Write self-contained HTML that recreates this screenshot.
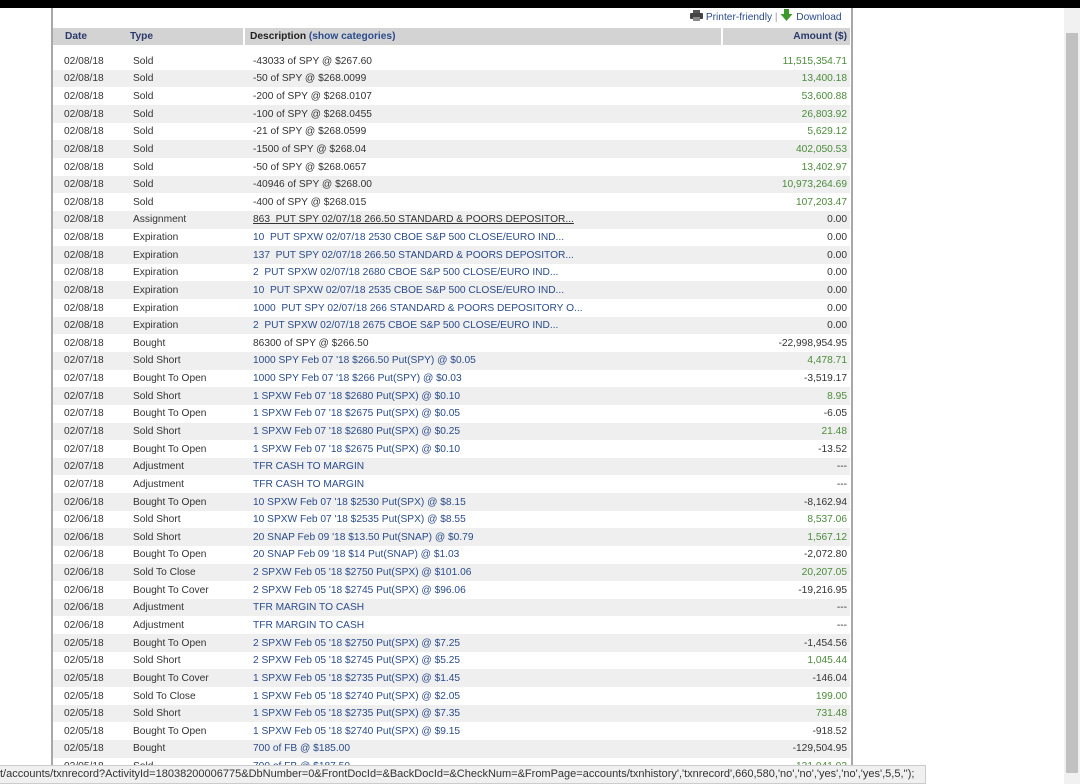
<!DOCTYPE html>
<html><head><meta charset="utf-8"><style>
*{margin:0;padding:0;box-sizing:border-box}
body{width:1080px;height:784px;overflow:hidden;background:#fff;font-family:"Liberation Sans",Arial,sans-serif;font-size:10.2px;color:#333;position:relative}
.top{position:absolute;left:0;top:0;width:1080px;height:8px;background:#000}
.lb{position:absolute;left:51px;top:8px;width:2px;height:760px;background:#a8a8a8}
.rb{position:absolute;left:851px;top:8px;width:2px;height:760px;background:#a8a8a8}
.sbt{position:absolute;left:1064px;top:8px;width:16px;height:776px;background:#f1f1f1}
.sbth{position:absolute;left:1066px;top:33px;width:12px;height:740px;background:#c1c1c1}
.links{position:absolute;top:9px;left:690px;font-size:10.2px;color:#2a4c8c;white-space:nowrap}
.hdr{position:absolute;left:53px;top:28px;width:797px;height:17px;background:#d3d3d3;font-weight:bold;color:#2a3a6a}
.hdr span{position:absolute;top:3px}
.sep{position:absolute;top:0;width:2px;height:17px;background:#fff}
.row{position:absolute;left:53px;width:797px;height:17.63px}
.row.g{background:#efefef}
.row span{position:absolute;top:3.5px;white-space:nowrap}
.d{left:11px}.t{left:80px}.s{left:200px}.a{right:3px}
.l{color:#2a4c8c}.u{text-decoration:underline;color:#333}
.p{color:#4b8c3a}
.status{position:absolute;left:0;top:765px;width:926px;height:19px;background:#f0f0f0;border:1px solid #ccc;border-left:none;font-size:11px;color:#333;padding:2px 0 0 0;white-space:nowrap;overflow:hidden}
</style></head><body>
<div class="top"></div>
<div class="lb"></div><div class="rb"></div>
<div class="sbt"></div><div class="sbth"></div>
<div class="links"><svg width="13" height="11" viewBox="0 0 13 11" style="vertical-align:-1px"><rect x="3" y="0" width="7" height="3" fill="#555"/><rect x="0" y="3" width="13" height="6" rx="1" fill="#444"/><rect x="3" y="7" width="7" height="4" fill="#888"/></svg> Printer-friendly <span style="color:#999">|</span> <svg width="13" height="12" viewBox="0 0 13 12" style="vertical-align:-1px"><path d="M4 0h5v5h3.5L6.5 12 0.5 5H4z" fill="#3c9a2a"/></svg> Download</div>
<div class="hdr"><span style="left:12px">Date</span><span style="left:77px">Type</span><div class="sep" style="left:190px"></div><span style="left:197px;color:#222">Description <span style="position:static;color:#2a4c8c">(show categories)</span></span><div class="sep" style="left:668px"></div><span style="right:3px">Amount ($)</span></div>
<div class="row" style="top:52.2px"><span class="d">02/08/18</span><span class="t">Sold</span><span class="s">-43033 of SPY @ $267.60</span><span class="a p">11,515,354.71</span></div>
<div class="row g" style="top:69.8px"><span class="d">02/08/18</span><span class="t">Sold</span><span class="s">-50 of SPY @ $268.0099</span><span class="a p">13,400.18</span></div>
<div class="row" style="top:87.5px"><span class="d">02/08/18</span><span class="t">Sold</span><span class="s">-200 of SPY @ $268.0107</span><span class="a p">53,600.88</span></div>
<div class="row g" style="top:105.1px"><span class="d">02/08/18</span><span class="t">Sold</span><span class="s">-100 of SPY @ $268.0455</span><span class="a p">26,803.92</span></div>
<div class="row" style="top:122.7px"><span class="d">02/08/18</span><span class="t">Sold</span><span class="s">-21 of SPY @ $268.0599</span><span class="a p">5,629.12</span></div>
<div class="row g" style="top:140.4px"><span class="d">02/08/18</span><span class="t">Sold</span><span class="s">-1500 of SPY @ $268.04</span><span class="a p">402,050.53</span></div>
<div class="row" style="top:158.0px"><span class="d">02/08/18</span><span class="t">Sold</span><span class="s">-50 of SPY @ $268.0657</span><span class="a p">13,402.97</span></div>
<div class="row g" style="top:175.6px"><span class="d">02/08/18</span><span class="t">Sold</span><span class="s">-40946 of SPY @ $268.00</span><span class="a p">10,973,264.69</span></div>
<div class="row" style="top:193.2px"><span class="d">02/08/18</span><span class="t">Sold</span><span class="s">-400 of SPY @ $268.015</span><span class="a p">107,203.47</span></div>
<div class="row g" style="top:210.9px"><span class="d">02/08/18</span><span class="t">Assignment</span><span class="s u">863&nbsp; PUT SPY 02/07/18 266.50 STANDARD &amp; POORS DEPOSITOR...</span><span class="a">0.00</span></div>
<div class="row" style="top:228.5px"><span class="d">02/08/18</span><span class="t">Expiration</span><span class="s l">10&nbsp; PUT SPXW 02/07/18 2530 CBOE S&amp;P 500 CLOSE/EURO IND...</span><span class="a">0.00</span></div>
<div class="row g" style="top:246.1px"><span class="d">02/08/18</span><span class="t">Expiration</span><span class="s l">137&nbsp; PUT SPY 02/07/18 266.50 STANDARD &amp; POORS DEPOSITOR...</span><span class="a">0.00</span></div>
<div class="row" style="top:263.8px"><span class="d">02/08/18</span><span class="t">Expiration</span><span class="s l">2&nbsp; PUT SPXW 02/07/18 2680 CBOE S&amp;P 500 CLOSE/EURO IND...</span><span class="a">0.00</span></div>
<div class="row g" style="top:281.4px"><span class="d">02/08/18</span><span class="t">Expiration</span><span class="s l">10&nbsp; PUT SPXW 02/07/18 2535 CBOE S&amp;P 500 CLOSE/EURO IND...</span><span class="a">0.00</span></div>
<div class="row" style="top:299.0px"><span class="d">02/08/18</span><span class="t">Expiration</span><span class="s l">1000&nbsp; PUT SPY 02/07/18 266 STANDARD &amp; POORS DEPOSITORY O...</span><span class="a">0.00</span></div>
<div class="row g" style="top:316.7px"><span class="d">02/08/18</span><span class="t">Expiration</span><span class="s l">2&nbsp; PUT SPXW 02/07/18 2675 CBOE S&amp;P 500 CLOSE/EURO IND...</span><span class="a">0.00</span></div>
<div class="row" style="top:334.3px"><span class="d">02/08/18</span><span class="t">Bought</span><span class="s">86300 of SPY @ $266.50</span><span class="a">-22,998,954.95</span></div>
<div class="row g" style="top:351.9px"><span class="d">02/07/18</span><span class="t">Sold Short</span><span class="s l">1000 SPY Feb 07 '18 $266.50 Put(SPY) @ $0.05</span><span class="a p">4,478.71</span></div>
<div class="row" style="top:369.6px"><span class="d">02/07/18</span><span class="t">Bought To Open</span><span class="s l">1000 SPY Feb 07 '18 $266 Put(SPY) @ $0.03</span><span class="a">-3,519.17</span></div>
<div class="row g" style="top:387.2px"><span class="d">02/07/18</span><span class="t">Sold Short</span><span class="s l">1 SPXW Feb 07 '18 $2680 Put(SPX) @ $0.10</span><span class="a p">8.95</span></div>
<div class="row" style="top:404.8px"><span class="d">02/07/18</span><span class="t">Bought To Open</span><span class="s l">1 SPXW Feb 07 '18 $2675 Put(SPX) @ $0.05</span><span class="a">-6.05</span></div>
<div class="row g" style="top:422.5px"><span class="d">02/07/18</span><span class="t">Sold Short</span><span class="s l">1 SPXW Feb 07 '18 $2680 Put(SPX) @ $0.25</span><span class="a p">21.48</span></div>
<div class="row" style="top:440.1px"><span class="d">02/07/18</span><span class="t">Bought To Open</span><span class="s l">1 SPXW Feb 07 '18 $2675 Put(SPX) @ $0.10</span><span class="a">-13.52</span></div>
<div class="row g" style="top:457.7px"><span class="d">02/07/18</span><span class="t">Adjustment</span><span class="s l">TFR CASH TO MARGIN</span><span class="a">---</span></div>
<div class="row" style="top:475.4px"><span class="d">02/07/18</span><span class="t">Adjustment</span><span class="s l">TFR CASH TO MARGIN</span><span class="a">---</span></div>
<div class="row g" style="top:493.0px"><span class="d">02/06/18</span><span class="t">Bought To Open</span><span class="s l">10 SPXW Feb 07 '18 $2530 Put(SPX) @ $8.15</span><span class="a">-8,162.94</span></div>
<div class="row" style="top:510.6px"><span class="d">02/06/18</span><span class="t">Sold Short</span><span class="s l">10 SPXW Feb 07 '18 $2535 Put(SPX) @ $8.55</span><span class="a p">8,537.06</span></div>
<div class="row g" style="top:528.3px"><span class="d">02/06/18</span><span class="t">Sold Short</span><span class="s l">20 SNAP Feb 09 '18 $13.50 Put(SNAP) @ $0.79</span><span class="a p">1,567.12</span></div>
<div class="row" style="top:545.9px"><span class="d">02/06/18</span><span class="t">Bought To Open</span><span class="s l">20 SNAP Feb 09 '18 $14 Put(SNAP) @ $1.03</span><span class="a">-2,072.80</span></div>
<div class="row g" style="top:563.5px"><span class="d">02/06/18</span><span class="t">Sold To Close</span><span class="s l">2 SPXW Feb 05 '18 $2750 Put(SPX) @ $101.06</span><span class="a p">20,207.05</span></div>
<div class="row" style="top:581.2px"><span class="d">02/06/18</span><span class="t">Bought To Cover</span><span class="s l">2 SPXW Feb 05 '18 $2745 Put(SPX) @ $96.06</span><span class="a">-19,216.95</span></div>
<div class="row g" style="top:598.8px"><span class="d">02/06/18</span><span class="t">Adjustment</span><span class="s l">TFR MARGIN TO CASH</span><span class="a">---</span></div>
<div class="row" style="top:616.4px"><span class="d">02/06/18</span><span class="t">Adjustment</span><span class="s l">TFR MARGIN TO CASH</span><span class="a">---</span></div>
<div class="row g" style="top:634.1px"><span class="d">02/05/18</span><span class="t">Bought To Open</span><span class="s l">2 SPXW Feb 05 '18 $2750 Put(SPX) @ $7.25</span><span class="a">-1,454.56</span></div>
<div class="row" style="top:651.7px"><span class="d">02/05/18</span><span class="t">Sold Short</span><span class="s l">2 SPXW Feb 05 '18 $2745 Put(SPX) @ $5.25</span><span class="a p">1,045.44</span></div>
<div class="row g" style="top:669.3px"><span class="d">02/05/18</span><span class="t">Bought To Cover</span><span class="s l">1 SPXW Feb 05 '18 $2735 Put(SPX) @ $1.45</span><span class="a">-146.04</span></div>
<div class="row" style="top:687.0px"><span class="d">02/05/18</span><span class="t">Sold To Close</span><span class="s l">1 SPXW Feb 05 '18 $2740 Put(SPX) @ $2.05</span><span class="a p">199.00</span></div>
<div class="row g" style="top:704.6px"><span class="d">02/05/18</span><span class="t">Sold Short</span><span class="s l">1 SPXW Feb 05 '18 $2735 Put(SPX) @ $7.35</span><span class="a p">731.48</span></div>
<div class="row" style="top:722.2px"><span class="d">02/05/18</span><span class="t">Bought To Open</span><span class="s l">1 SPXW Feb 05 '18 $2740 Put(SPX) @ $9.15</span><span class="a">-918.52</span></div>
<div class="row g" style="top:739.9px"><span class="d">02/05/18</span><span class="t">Bought</span><span class="s l">700 of FB @ $185.00</span><span class="a">-129,504.95</span></div>
<div class="row" style="top:757.5px"><span class="d">02/05/18</span><span class="t">Sold</span><span class="s l">700 of FB @ $187.50</span><span class="a p">131,041.03</span></div>
<div class="status">t/accounts/txnrecord?ActivityId=18038200006775&amp;DbNumber=0&amp;FrontDocId=&amp;BackDocId=&amp;CheckNum=&amp;FromPage=accounts/txnhistory','txnrecord',660,580,'no','no','yes','no','yes',5,5,'');</div>
</body></html>
